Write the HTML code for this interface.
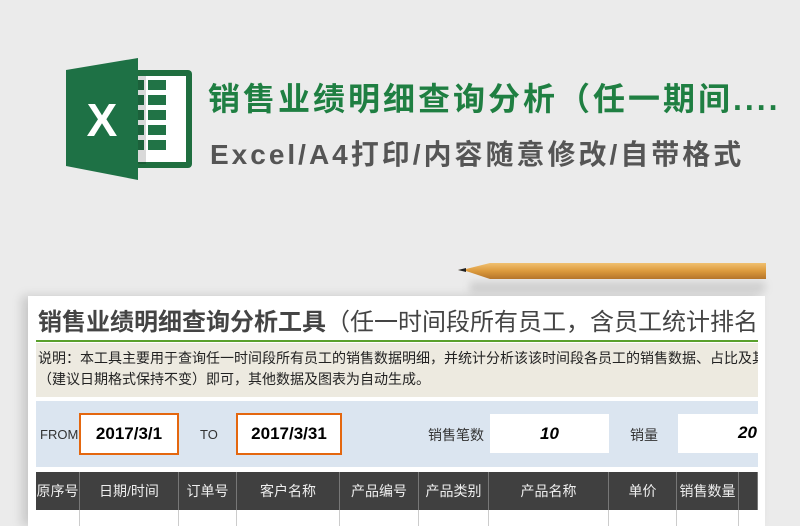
<!DOCTYPE html>
<html><head><meta charset="utf-8"><style>
*{margin:0;padding:0;box-sizing:border-box}
html,body{width:800px;height:526px;overflow:hidden}
body{background:#ebebeb;position:relative;font-family:"Liberation Sans","Noto Sans CJK SC",sans-serif}
.a{position:absolute}
.t1{left:208px;top:74px;font-size:32px;font-weight:bold;color:#1f7f42;white-space:nowrap;letter-spacing:3px}
.t2{left:210px;top:133px;font-size:28px;font-weight:bold;color:#555;white-space:nowrap;letter-spacing:3px}
.sheet{left:28px;top:296px;width:737px;height:230px;background:#fff;box-shadow:-6px 0 10px rgba(0,0,0,.15)}
.hd{top:472px;height:38px;background:#404040;color:#eee;font-size:14px;display:flex;align-items:center;justify-content:center;border-right:1px solid #777}
.row{top:510px;height:16px;border-right:1px solid #ccc}
</style></head><body>
<svg class="a" style="left:66px;top:58px" width="130" height="122" viewBox="0 0 130 122">
<rect x="52" y="12" width="74" height="98" rx="4" fill="#1f6e3f"/>
<rect x="58" y="18" width="62" height="86" fill="#fff"/>
<g fill="#217346">
<rect x="60" y="22" width="18" height="10"/><rect x="82" y="22" width="18" height="10"/>
<rect x="60" y="37" width="18" height="10"/><rect x="82" y="37" width="18" height="10"/>
<rect x="60" y="52" width="18" height="10"/><rect x="82" y="52" width="18" height="10"/>
<rect x="60" y="67" width="18" height="10"/><rect x="82" y="67" width="18" height="10"/>
<rect x="60" y="82" width="18" height="10"/><rect x="82" y="82" width="18" height="10"/>
</g>
<rect x="66" y="18" width="14" height="88" fill="#000" opacity=".15"/>
<polygon points="0,12 72,0 72,122 0,108" fill="#1e7145"/>
<text x="36" y="78" font-family="Liberation Sans" font-weight="bold" font-size="46" fill="#fff" text-anchor="middle">X</text>
</svg>
<div class="a t1">销售业绩明细查询分析（任一期间....</div>
<div class="a t2">Excel/A4打印/内容随意修改/自带格式</div>
<div class="a" style="left:470px;top:282px;width:295px;height:10px;background:rgba(0,0,0,.12);filter:blur(4px)"></div>
<svg class="a" style="left:456px;top:260px" width="312" height="24" viewBox="0 0 312 24">
<defs><linearGradient id="g" x1="0" y1="0" x2="0" y2="1"><stop offset="0" stop-color="#f0c070"/><stop offset=".5" stop-color="#dc9a3c"/><stop offset="1" stop-color="#b5752a"/></linearGradient></defs>
<polygon points="2,10 10,9 34,3 310,3 310,19 34,19 10,11" fill="url(#g)"/>
<polygon points="2,10 10,8 10,12" fill="#222"/>
</svg>
<div class="a sheet"></div>
<div class="a" style="left:38px;top:302px;width:720px;overflow:hidden;font-size:24px;color:#444;white-space:nowrap"><b>销售业绩明细查询分析工具</b>（任一时间段所有员工，含员工统计排名</div>
<div class="a" style="left:36px;top:340px;width:722px;height:2px;background:#5aa02c"></div>
<div class="a" style="left:36px;top:343px;width:722px;height:54px;background:#edeae0;font-size:14px;color:#222;line-height:21px;padding:5px 0 0 2px;white-space:nowrap;overflow:hidden">说明：本工具主要用于查询任一时间段所有员工的销售数据明细，并统计分析该该时间段各员工的销售数据、占比及其排名<br>（建议日期格式保持不变）即可，其他数据及图表为自动生成。</div>
<div class="a" style="left:36px;top:401px;width:722px;height:66px;background:#dbe5f0"></div>
<div class="a" style="left:40px;top:427px;font-size:13px;color:#333">FROM</div>
<div class="a" style="left:79px;top:413px;width:100px;height:42px;border:2px solid #e4670f;background:#fff;font-size:17px;font-weight:bold;display:flex;align-items:center;justify-content:center">2017/3/1</div>
<div class="a" style="left:200px;top:427px;font-size:13px;color:#333">TO</div>
<div class="a" style="left:236px;top:413px;width:106px;height:42px;border:2px solid #e4670f;background:#fff;font-size:17px;font-weight:bold;display:flex;align-items:center;justify-content:center">2017/3/31</div>
<div class="a" style="left:428px;top:425px;font-size:14px;color:#333">销售笔数</div>
<div class="a" style="left:490px;top:414px;width:119px;height:39px;background:#fff;font-size:17px;font-weight:bold;font-style:italic;display:flex;align-items:center;justify-content:center">10</div>
<div class="a" style="left:630px;top:425px;font-size:14px;color:#333">销量</div>
<div class="a" style="left:678px;top:414px;width:80px;height:39px;background:#fff;font-size:17px;font-weight:bold;font-style:italic;padding:9px 0 0 60px;overflow:hidden;white-space:nowrap">20</div>
<div class="a hd" style="left:36px;width:44px">原序号</div>
<div class="a hd" style="left:80px;width:99px">日期/时间</div>
<div class="a hd" style="left:179px;width:58px">订单号</div>
<div class="a hd" style="left:237px;width:103px">客户名称</div>
<div class="a hd" style="left:340px;width:79px">产品编号</div>
<div class="a hd" style="left:419px;width:70px">产品类别</div>
<div class="a hd" style="left:489px;width:120px">产品名称</div>
<div class="a hd" style="left:609px;width:68px">单价</div>
<div class="a hd" style="left:677px;width:62px">销售数量</div>
<div class="a hd" style="left:739px;width:19px"></div>
<div class="a row" style="left:36px;width:44px"></div><div class="a row" style="left:80px;width:99px"></div><div class="a row" style="left:179px;width:58px"></div><div class="a row" style="left:237px;width:103px"></div><div class="a row" style="left:340px;width:79px"></div><div class="a row" style="left:419px;width:70px"></div><div class="a row" style="left:489px;width:120px"></div><div class="a row" style="left:609px;width:68px"></div><div class="a row" style="left:677px;width:62px"></div>
</body></html>
